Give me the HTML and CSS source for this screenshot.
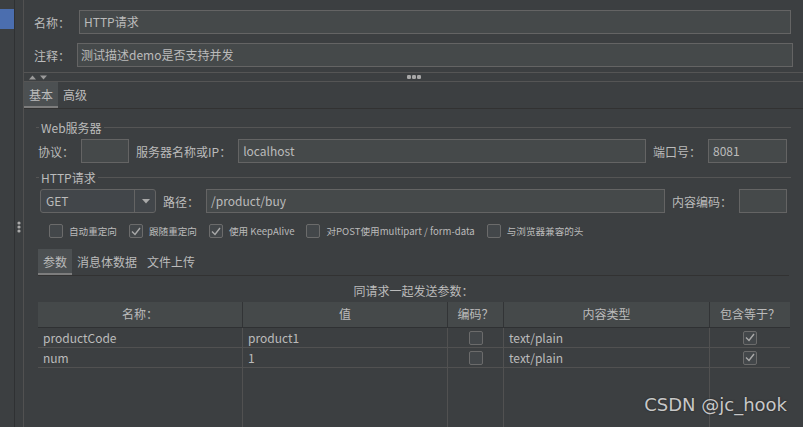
FILE: index.html
```html
<!DOCTYPE html>
<html lang="zh">
<head>
<meta charset="utf-8">
<title>HTTP请求</title>
<link rel="stylesheet" href="styles.css">
</head>
<body>
<div class="app">
  <div class="sidebar"><div class="sel"></div></div>
  <div class="gutter">
    <svg class="vdots" width="4" height="12" viewBox="0 0 4 12"><circle cx="2" cy="2" r="1.6"/><circle cx="2" cy="6" r="1.6"/><circle cx="2" cy="10" r="1.6"/></svg>
  </div>
  <div class="main">
    <div class="top">
      <div class="frow frow-name"><span class="lbl">名称：</span><div class="inp">HTTP请求</div></div>
      <div class="frow frow-comment"><span class="lbl">注释：</span><div class="inp inp-c">测试描述demo是否支持并发</div></div>
    </div>
    <div class="splitter">
      <svg class="arrows" width="19" height="5" viewBox="0 0 19 5"><polygon points="0,4.5 3.5,0.5 7,4.5"/><polygon points="11,0.5 18,0.5 14.5,4.5"/></svg>
      <svg class="hdots" width="14" height="4" viewBox="0 0 14 4"><rect x="0" y="0" width="4" height="4" rx="1.2"/><rect x="5" y="0" width="4" height="4" rx="1.2"/><rect x="10" y="0" width="4" height="4" rx="1.2"/></svg>
      <span></span>
    </div>
    <div class="tabs"><div class="tab active">基本</div><div class="tab">高级</div></div>
    <div class="panel">
      <div class="titled"><span class="tick"></span><span class="ttl">Web服务器</span><span class="rule"></span></div>
      <div class="row row-server">
        <span>协议：</span>
        <div class="inp w48"></div>
        <span>服务器名称或IP：</span>
        <div class="inp grow">localhost</div>
        <span>端口号：</span>
        <div class="inp w79">8081</div>
      </div>
      <div class="titled titled-http"><span class="tick"></span><span class="ttl">HTTP请求</span><span class="rule"></span></div>
      <div class="row row-http">
        <div class="combo"><span class="combo-text">GET</span><span class="combo-btn"><svg width="8" height="5" viewBox="0 0 8 5"><polygon points="0,0 8,0 4,4.5"/></svg></span></div>
        <span>路径：</span>
        <div class="inp grow">/product/buy</div>
        <span>内容编码：</span>
        <div class="inp w48"></div>
      </div>
      <div class="checks">
        <div class="chk-item"><span class="cb"></span><span>自动重定向</span></div>
        <div class="chk-item"><span class="cb"><svg width="10" height="9" viewBox="0 0 10 9"><polyline points="1,4.5 4,7.5 9,1"/></svg></span><span>跟随重定向</span></div>
        <div class="chk-item"><span class="cb"><svg width="10" height="9" viewBox="0 0 10 9"><polyline points="1,4.5 4,7.5 9,1"/></svg></span><span>使用 KeepAlive</span></div>
        <div class="chk-item"><span class="cb"></span><span>对POST使用multipart / form-data</span></div>
        <div class="chk-item"><span class="cb"></span><span>与浏览器兼容的头</span></div>
      </div>
      <div class="params">
        <div class="tabs subtabs"><div class="tab active">参数</div><div class="tab">消息体数据</div><div class="tab">文件上传</div></div>
        <div class="ptitle">同请求一起发送参数：</div>
        <div class="grid">
          <div class="th">名称：</div>
          <div class="th">值</div>
          <div class="th">编码？</div>
          <div class="th">内容类型</div>
          <div class="th last">包含等于？</div>

          <div class="td">productCode</div>
          <div class="td">product1</div>
          <div class="td center"><span class="cb"></span></div>
          <div class="td">text/plain</div>
          <div class="td center last"><span class="cb"><svg width="10" height="9" viewBox="0 0 10 9"><polyline points="1,4.5 4,7.5 9,1"/></svg></span></div>

          <div class="td">num</div>
          <div class="td">1</div>
          <div class="td center"><span class="cb"></span></div>
          <div class="td">text/plain</div>
          <div class="td center last"><span class="cb"><svg width="10" height="9" viewBox="0 0 10 9"><polyline points="1,4.5 4,7.5 9,1"/></svg></span></div>

          <div class="tf"></div>
          <div class="tf"></div>
          <div class="tf"></div>
          <div class="tf"></div>
          <div class="tf last"></div>
        </div>
      </div>
    </div>
  </div>
  <div class="watermark">CSDN @jc_hook</div>
</div>
</body>
</html>
```

FILE: styles.css
```css
* { box-sizing: border-box; }
html, body { margin: 0; padding: 0; }
body {
  width: 803px;
  height: 427px;
  overflow: hidden;
  background: #3c3f41;
  color: #bbbbbb;
  font-family: "Noto Sans CJK SC", sans-serif;
  font-size: 12px;
}
.app { display: flex; height: 427px; position: relative; overflow: hidden; }

.sidebar { width: 15px; flex: none; border-right: 1px solid #2f3133; padding-top: 9px; }
.sel { width: 14px; height: 20px; background: #4b6eaf; }
.gutter { width: 9px; flex: none; border-right: 1px solid #515151; padding-top: 221px; display: flex; justify-content: center; align-items: flex-start; }
.vdots { fill: #a9a9a9; }

.main { flex: 1; min-width: 0; display: flex; flex-direction: column; }
.main > *, .panel > *, .params > * { flex-shrink: 0; }

.top { padding: 10px 0 0 10px; display: flex; flex-direction: column; gap: 9px; }
.frow { display: flex; align-items: center; height: 24px; }
.frow .lbl { flex: none; }
.frow-name { padding-right: 12px; }
.frow-name .lbl { width: 45px; }
.frow-comment { padding-right: 10px; }
.frow-comment .lbl { width: 43px; }

.inp {
  height: 24px;
  background: #45494a;
  border: 1px solid #646464;
  padding: 0 4px;
  line-height: 22px;
  white-space: nowrap;
  overflow: hidden;
  flex: 1;
}
.inp-c { padding-left: 3px; }
.w48 { flex: none; width: 48px; }
.w79 { flex: none; width: 79px; }
.grow { flex: 1; min-width: 0; }

.splitter {
  margin-top: 5px;
  height: 10px;
  border-top: 1px solid #555555;
  border-bottom: 1px solid #555555;
  display: grid;
  grid-template-columns: 1fr auto 1fr;
  align-items: center;
}
.arrows { fill: #9a9a9a; margin-left: 5px; display: block; }
.hdots { fill: #a8a8a8; display: block; }

.tabs { display: flex; height: 27px; border-bottom: 1px solid #323232; }
.tab { padding: 2px 5px 0; line-height: 22px; border-bottom: 2px solid transparent; white-space: nowrap; }
.tab.active { background: #4c5052; border-bottom-color: #7d7d7d; }

.panel { padding: 10px 12px 0; display: flex; flex-direction: column; }
.titled { display: flex; align-items: center; height: 17px; }
.tick { width: 3px; height: 1px; background: #555555; }
.ttl { padding: 0 2px; line-height: 17px; white-space: nowrap; }
.rule { flex: 1; height: 1px; background: #555555; }
.titled-http { margin-top: 6px; }

.row { display: flex; align-items: center; gap: 7px; height: 24px; white-space: nowrap; }
.row-server { margin-top: 3px; padding: 0 4px 0 2px; }
.row-http { margin-top: 3px; padding: 0 4px 0 4px; }

.combo {
  flex: none;
  width: 116px;
  height: 24px;
  border: 1px solid #646464;
  border-radius: 3px;
  background: #42464a;
  display: flex;
}
.combo-text { flex: 1; padding-left: 5px; line-height: 22px; }
.combo-btn { width: 21px; border-left: 1px solid #646464; display: flex; align-items: center; justify-content: center; }
.combo-btn svg { fill: #a9a9a9; display: block; margin-left: 1px; }

.checks { margin-top: 11px; height: 14px; display: flex; align-items: center; padding-left: 13px; }
.chk-item { display: flex; align-items: center; gap: 6px; margin-right: 12px; font-size: 9.6px; line-height: 14px; white-space: nowrap; }
.cb {
  width: 14px;
  height: 14px;
  flex: none;
  border: 1px solid #6b6b6b;
  border-radius: 2px;
  background: #43474a;
  display: flex;
  align-items: center;
  justify-content: center;
}
.cb svg { display: block; fill: none; stroke: #a9a9a9; stroke-width: 1.4; }

.params { margin: 11px 2px 0; display: flex; flex-direction: column; }
.ptitle { height: 26px; padding-top: 4px; line-height: 22px; text-align: center; }

.grid { display: grid; grid-template-columns: 205px 205px 56px 206px 80px; }
.th {
  height: 26px;
  background: #45494a;
  border-right: 1px solid #323436;
  border-bottom: 1px solid #2f3133;
  text-align: center;
  line-height: 24px;
  white-space: nowrap;
}
.td {
  height: 20px;
  border-right: 1px solid #515151;
  border-bottom: 1px solid #515151;
  padding-left: 5px;
  line-height: 19px;
  white-space: nowrap;
}
.td.center { padding-left: 0; display: flex; align-items: center; justify-content: center; }
.tf { height: 70px; border-right: 1px solid #515151; }
.th.last, .td.last, .tf.last { border-right: none; }

.watermark {
  position: absolute;
  right: 16px;
  top: 396px;
  font-family: "DejaVu Sans", sans-serif;
  font-size: 18px;
  line-height: 18px;
  color: #c8c8c8;
  text-shadow: 0 0 2px rgba(0, 0, 0, 0.5);
  white-space: nowrap;
}
```
